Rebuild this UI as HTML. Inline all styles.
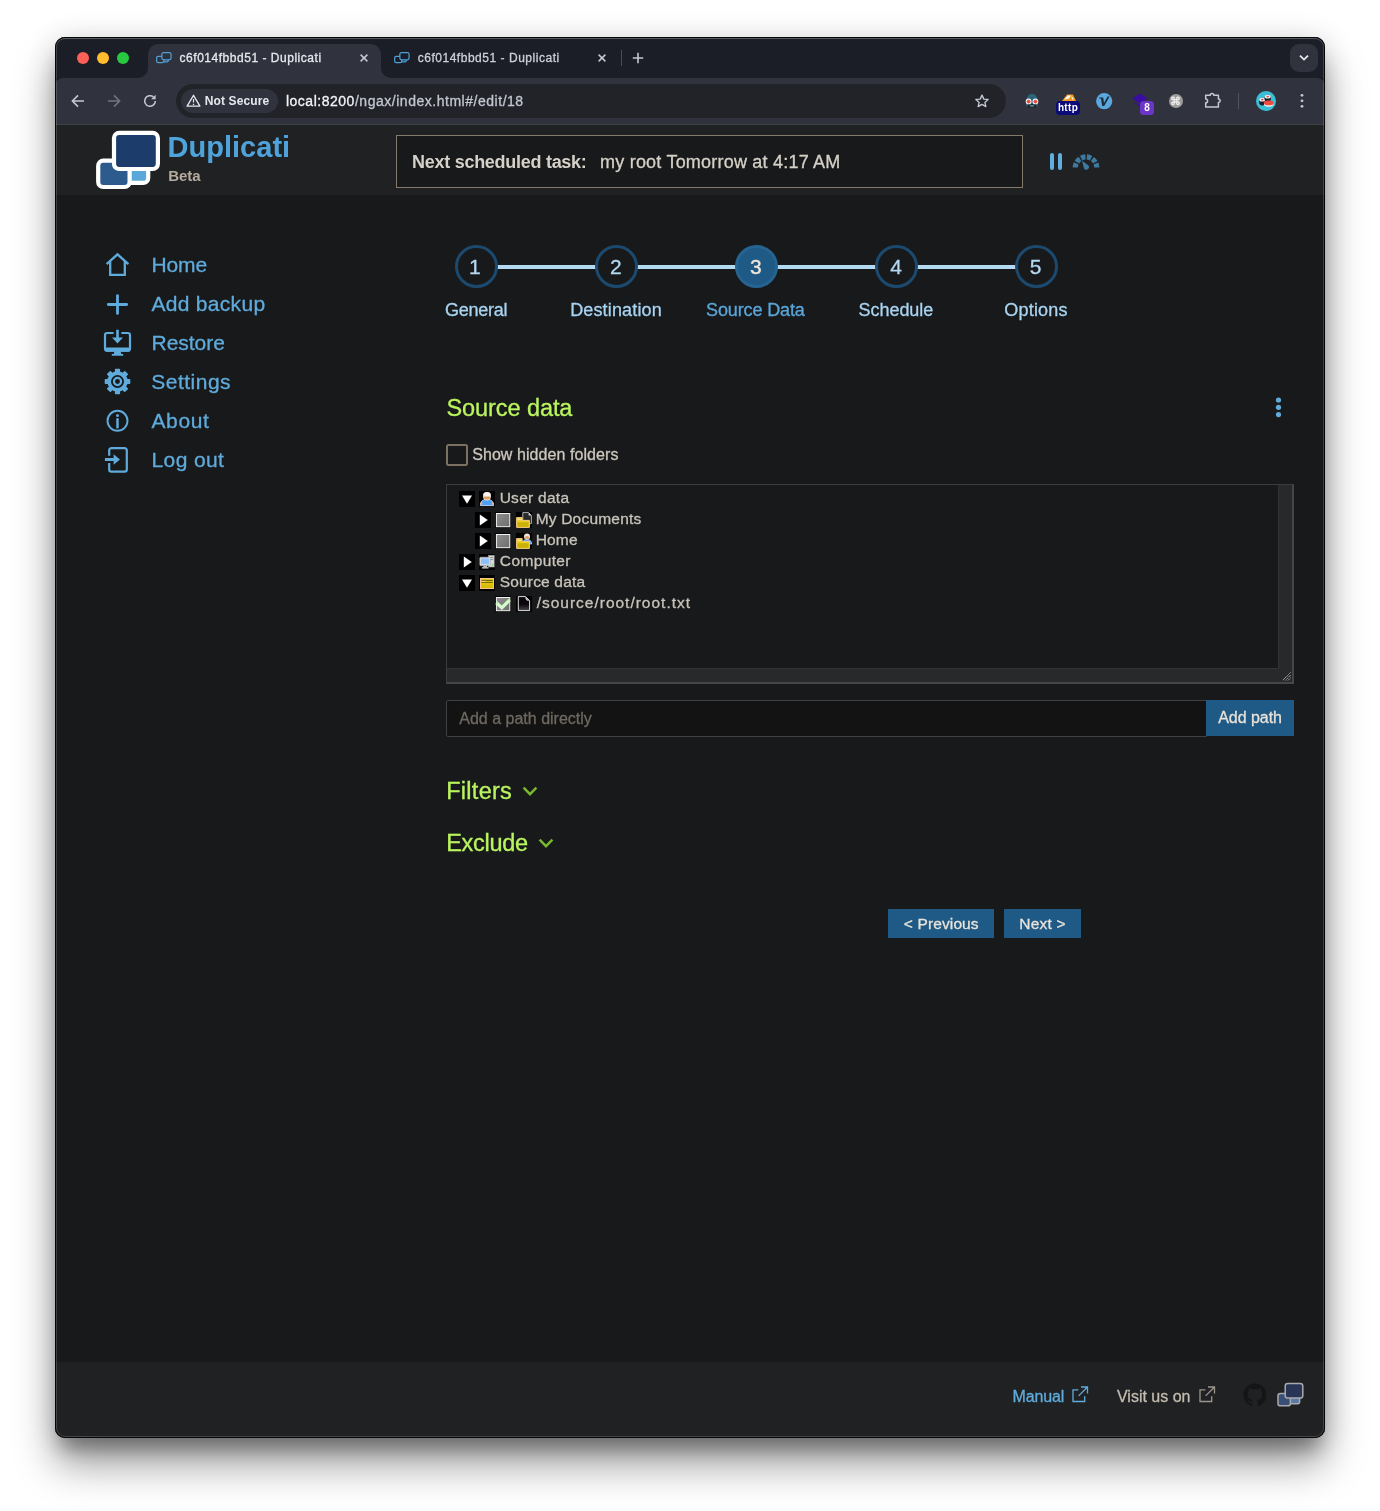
<!DOCTYPE html>
<html lang="en">
<head>
<meta charset="utf-8">
<title>c6f014fbbd51 - Duplicati</title>
<style>
html,body{margin:0;padding:0;background:#fff;}
body{width:1380px;height:1511px;position:relative;overflow:hidden;font-family:"Liberation Sans",sans-serif;}
#win{position:absolute;left:55px;top:37px;width:1270px;height:1401px;border-radius:10px;overflow:hidden;background:#18191b;
 box-shadow:0 26px 40px rgba(0,0,0,.40),0 16px 18px -6px rgba(0,0,0,.28),0 0 30px rgba(0,0,0,.11);}
#page{will-change:transform;position:absolute;left:-55px;top:-37px;width:1380px;height:1511px;}
#page div,#page span,#page svg,#page a{position:absolute;box-sizing:border-box;}
.t{white-space:pre;font-family:"Liberation Sans",sans-serif;}
.s{-webkit-text-stroke:0.3px;}
svg{overflow:visible;}
#edge{position:absolute;left:55px;top:37px;width:1270px;height:1401px;border-radius:10px;box-shadow:inset 0 0 0 1px rgba(0,0,0,.92),inset 0 0 0 2px rgba(255,255,255,.17),inset 0 2px 0 0 rgba(255,255,255,.12);pointer-events:none;}

</style>
</head>
<body>
<div id="win"><div id="page">

<div class="tabstrip" style="left:55px;top:37px;width:1270px;height:41px;background:#1b1e27"></div>
<div class="toolbar" style="left:55px;top:78px;width:1270px;height:47px;background:#30333d;border-bottom:1px solid #3e4048;border-radius:8px 8px 0 0"></div>
<div class="tab active" style="left:148px;top:44px;width:233px;height:34px;background:#30333d;border-radius:10px 10px 0 0"></div>
<svg style="left:138px;top:68px" width="10" height="10"><path d="M10 0V10H0A10 10 0 0 0 10 0Z" fill="#30333d"/></svg>
<svg style="left:381px;top:68px" width="10" height="10"><path d="M0 0V10H10A10 10 0 0 1 0 0Z" fill="#30333d"/></svg>
<div class="light" style="left:76.8px;top:51.8px;width:12.4px;height:12.4px;border-radius:50%;background:#fe5f57"></div>
<div class="light" style="left:96.8px;top:51.8px;width:12.4px;height:12.4px;border-radius:50%;background:#febc2e"></div>
<div class="light" style="left:116.8px;top:51.8px;width:12.4px;height:12.4px;border-radius:50%;background:#28c840"></div>
<svg style="left:155.8px;top:52.4px" width="16" height="11.3" viewBox="0 0 17 12"><g fill="none" stroke="#4e9fd4" stroke-width="1.3"><rect x="6.2" y="0.7" width="9.8" height="7.6" rx="1.8"/><path d="M6.2 4.6H2.4a1.7 1.7 0 0 0-1.7 1.7v3.3a1.7 1.7 0 0 0 1.7 1.7h4.2a1.7 1.7 0 0 0 1.7-1.7V8.3"/><path d="M8.3 10.4h3.4a1.3 1.3 0 0 0 1.3-1.3V8.3"/></g></svg>
<span class="t s" style="left:179.59px;top:49px;font-size:12px;line-height:18px;color:#e6e8ee;letter-spacing:0.524px;">c6f014fbbd51 - Duplicati</span>
<svg style="left:360px;top:54px" width="8" height="8" viewBox="0 0 8 8"><path d="M0.6 0.6L7.4 7.4M7.4 0.6L0.6 7.4" stroke="#c5c8d2" stroke-width="1.5" fill="none"/></svg>
<svg style="left:393.9px;top:52.4px" width="16" height="11.3" viewBox="0 0 17 12"><g fill="none" stroke="#4e9fd4" stroke-width="1.3"><rect x="6.2" y="0.7" width="9.8" height="7.6" rx="1.8"/><path d="M6.2 4.6H2.4a1.7 1.7 0 0 0-1.7 1.7v3.3a1.7 1.7 0 0 0 1.7 1.7h4.2a1.7 1.7 0 0 0 1.7-1.7V8.3"/><path d="M8.3 10.4h3.4a1.3 1.3 0 0 0 1.3-1.3V8.3"/></g></svg>
<span class="t s" style="left:417.69px;top:49px;font-size:12px;line-height:18px;color:#cdd0d8;letter-spacing:0.524px;">c6f014fbbd51 - Duplicati</span>
<svg style="left:598px;top:54px" width="8" height="8" viewBox="0 0 8 8"><path d="M0.6 0.6L7.4 7.4M7.4 0.6L0.6 7.4" stroke="#c5c8d2" stroke-width="1.5" fill="none"/></svg>
<div style="left:620.5px;top:50px;width:1.2px;height:16px;background:#4a4d57"></div>
<svg style="left:632px;top:52px" width="12" height="12" viewBox="0 0 12 12"><path d="M6 0.8V11.2M0.8 6H11.2" stroke="#c5c8d2" stroke-width="1.6" fill="none"/></svg>
<div style="left:1290px;top:44px;width:28px;height:28px;border-radius:9px;background:#30333d"></div>
<svg style="left:1298px;top:54px" width="12" height="8" viewBox="0 0 12 8"><path d="M2 1.6L6 5.6L10 1.6" stroke="#e6e8ee" stroke-width="1.8" fill="none"/></svg>

<svg style="left:71px;top:94px" width="14" height="14" viewBox="0 0 14 14"><path d="M13 7H1.8M7 1.4L1.4 7L7 12.6" stroke="#c5c8d2" stroke-width="1.6" fill="none"/></svg>
<svg style="left:107px;top:94px" width="14" height="14" viewBox="0 0 14 14"><path d="M1 7H12.2M7 1.4L12.6 7L7 12.6" stroke="#72757f" stroke-width="1.6" fill="none"/></svg>
<svg style="left:143px;top:94px" width="14" height="14" viewBox="0 0 14 14"><path d="M12.3 7A5.3 5.3 0 1 1 10.4 2.9" stroke="#c5c8d2" stroke-width="1.5" fill="none"/><path d="M12.6 0.8V5.2H8.2Z" fill="#c5c8d2"/></svg>

<div class="omnibox" style="left:176px;top:84px;width:829.6px;height:34px;border-radius:17px;background:#212328"></div>
<div class="chip" style="left:181px;top:89px;width:96.5px;height:24px;border-radius:12px;background:#30333d"></div>
<svg style="left:186px;top:94px" width="15" height="13" viewBox="0 0 15 13"><path d="M7.5 1.3L13.9 12.2H1.1Z" stroke="#e6e8ee" stroke-width="1.3" fill="none" stroke-linejoin="round"/><path d="M7.5 5V8.6M7.5 9.8V11" stroke="#e6e8ee" stroke-width="1.2"/></svg>
<span class="t" style="left:204.78px;top:92px;font-size:12px;line-height:18px;color:#e6e8ee;font-weight:700;letter-spacing:0.115px;">Not Secure</span>
<span class="t s" style="left:285.89px;top:91px;font-size:14px;line-height:20px;color:#c3c6d0;letter-spacing:0.523px;"><span class="host" style="position:static;color:#f1f3f8">local:8200</span>/ngax/index.html#/edit/18</span>
<svg style="left:974px;top:92.6px" width="16" height="16" viewBox="0 0 24 24"><path d="M12 3.2l2.7 6 6.5.6-4.9 4.3 1.5 6.4-5.8-3.5-5.8 3.5 1.5-6.4-4.9-4.3 6.5-.6z" stroke="#c5c8d2" stroke-width="2" fill="none" stroke-linejoin="round"/></svg>

<svg style="left:1024px;top:93px" width="16" height="16" viewBox="0 0 16 16"><path d="M2.2 9C2.2 3.8 4.6 0.8 8 0.8S13.8 3.8 13.8 9V13.6H2.2Z" fill="#2b6478"/><rect x="3.6" y="11.2" width="8.8" height="3.4" rx="0.6" fill="#16242b"/><circle cx="4.6" cy="8.4" r="2.9" fill="#f2f2f2"/><circle cx="11.4" cy="8.4" r="2.9" fill="#f2f2f2"/><circle cx="4.6" cy="8.6" r="1.9" fill="#ea4d3c"/><circle cx="11.4" cy="8.6" r="1.9" fill="#ea4d3c"/><rect x="6" y="12.4" width="4" height="1" fill="#8fb3c2"/></svg>
<svg style="left:1061px;top:93px" width="16" height="9" viewBox="0 0 16 9"><path d="M1 8L6 1.5H12L15 8Z" fill="#f29a1f"/><path d="M3 6.5L7 2.5H10L8 5.5Z" fill="#fff"/><path d="M10.5 3L13 6.5H11Z" fill="#fff"/></svg>
<div style="left:1056px;top:101px;width:24px;height:14px;border-radius:4px;background:#0a0a78"></div>
<span class="t" style="left:1057.95px;top:100px;font-size:10px;line-height:15px;color:#ffffff;font-weight:700;letter-spacing:0.307px;">http</span>
<svg style="left:1095.8px;top:93px" width="16.4" height="16.4" viewBox="0 0 16.4 16.4"><circle cx="8.2" cy="8.2" r="8.1" fill="#5aa8de"/><path d="M3.2 4.6H7.2L8 10L11.6 3.6L13.6 3.4L8.2 13H6.2L5 5.6H3.2Z" fill="#1d2b3a"/></svg>
<svg style="left:1131.5px;top:92.5px" width="17" height="16" viewBox="0 0 17 16"><path d="M8 0.4L15.6 5.4L8 10.4L0.4 5.4Z" fill="#3a0ca3"/><path d="M0.4 8.4L8 13.4L15.6 8.4L8 11.8Z" fill="#3a0ca3"/></svg>
<div style="left:1140px;top:100.8px;width:14px;height:14px;border-radius:3.5px;background:#6b36c7"></div>
<span class="t" style="left:1144.13px;top:100px;font-size:10px;line-height:15px;color:#ffffff;font-weight:700;">8</span>
<div style="left:1168.8px;top:93.6px;width:14.6px;height:14.6px;border-radius:50%;background:#9d9d9d"></div>
<span class="t s" style="left:1170.18px;top:93px;font-size:11px;line-height:16px;color:#f2f2f2;font-family:"DejaVu Sans",sans-serif;">⌘</span>
<svg style="left:1203px;top:90px" width="21" height="20" viewBox="1203 90 21 20"><path d="M1205.7 95.2H1210.3A1.75 1.75 0 0 1 1213.8 95.2H1218.4V99.1A1.75 1.75 0 0 1 1218.4 102.6V107H1205.7V102.8A1.9 1.9 0 0 0 1205.7 99Z" stroke="#c5c8d2" stroke-width="1.5" fill="none" stroke-linejoin="round"/></svg>
<div style="left:1238.2px;top:93px;width:1.3px;height:16px;background:#50535d"></div>
<div style="left:1256px;top:90.8px;width:20.2px;height:20.2px;border-radius:50%;background:#3bbfd8"></div>
<svg style="left:1256px;top:90.8px" width="20.2" height="20.2" viewBox="0 0 20 20"><ellipse cx="6.2" cy="10.6" rx="3.2" ry="3.8" fill="#1b1f2e"/><ellipse cx="6.2" cy="8.6" rx="3" ry="1.9" fill="#f4f4f4"/><ellipse cx="6.2" cy="8.6" rx="1.3" ry="0.8" fill="#e5483a"/><ellipse cx="11.6" cy="7.4" rx="3.2" ry="3.6" fill="#1b1f2e"/><ellipse cx="11.6" cy="5.6" rx="3" ry="1.8" fill="#f4f4f4"/><ellipse cx="11.6" cy="5.6" rx="1.3" ry="0.8" fill="#e5483a"/><ellipse cx="12.6" cy="13" rx="4.8" ry="2.6" fill="#f4f4f4"/><ellipse cx="12.6" cy="11.8" rx="4.8" ry="2.4" fill="#ef4b3f"/></svg>
<svg style="left:1300px;top:93px" width="4" height="16" viewBox="0 0 4 16"><circle cx="2" cy="2.3" r="1.4" fill="#c5c8d2"/><circle cx="2" cy="7.8" r="1.4" fill="#c5c8d2"/><circle cx="2" cy="13.3" r="1.4" fill="#c5c8d2"/></svg>

<div class="header" style="left:55px;top:125px;width:1270px;height:70px;background:#202123"></div>
<svg class="logo" style="left:90px;top:125px" width="80" height="70" viewBox="90 125 80 70">
<rect x="126" y="158" width="22.2" height="24.9" rx="5" fill="#5aa8da" stroke="#fff" stroke-width="4.2"/>
<rect x="98.2" y="160.7" width="31.4" height="26.3" rx="5" fill="#2e5b8d" stroke="#fff" stroke-width="4.2"/>
<rect x="114" y="132.9" width="43.9" height="36.1" rx="5.2" fill="#1c3d6c" stroke="#fff" stroke-width="4.2"/>
</svg>
<span class="t" style="left:167.49px;top:129px;font-size:29px;line-height:36px;color:#4fa3db;font-weight:700;letter-spacing:0.022px;">Duplicati</span>
<span class="t" style="left:168.15px;top:165px;font-size:15px;line-height:21px;color:#b5ab9e;font-weight:700;">Beta</span>
<div class="status" style="left:396px;top:135px;width:627px;height:52.5px;background:#18191b;border:1px solid #84796a"></div>
<span class="t" style="left:412.06px;top:150px;font-size:18px;line-height:24px;color:#d6d1c8;font-weight:700;letter-spacing:-0.278px;">Next scheduled task:</span>
<span class="t s" style="left:600.06px;top:150px;font-size:18px;line-height:24px;color:#d6d1c8;letter-spacing:0.212px;">my root Tomorrow at 4:17 AM</span>
<div style="left:1049.9px;top:152.6px;width:4.3px;height:17.8px;border-radius:2.2px;background:#5faee0"></div>
<div style="left:1057.9px;top:152.6px;width:4.3px;height:17.8px;border-radius:2.2px;background:#5faee0"></div>
<svg style="left:1072px;top:152.6px" width="28" height="18" viewBox="1072 152 28 18">
<g fill="none" stroke="#40799f" stroke-width="5.2" stroke-dasharray="4.37 1.48">
<path d="M1075.3 166.6A10.7 10.7 0 0 1 1096.7 166.6"/>
</g>
<path d="M1082 159.8L1088.3 164.2A2.7 2.7 0 1 1 1083.9 167.2Z" fill="#40799f"/>
</svg>

<div class="sidebar" style="left:55px;top:195px;width:330px;height:1167px"></div>
<span class="t s" style="left:151.53px;top:251px;font-size:21px;line-height:27px;color:#5fabdc;letter-spacing:-0.146px;">Home</span>
<span class="t s" style="left:151.46px;top:290px;font-size:21px;line-height:27px;color:#5fabdc;letter-spacing:0.300px;">Add backup</span>
<span class="t s" style="left:151.53px;top:329px;font-size:21px;line-height:27px;color:#5fabdc;letter-spacing:-0.040px;">Restore</span>
<span class="t s" style="left:151.24px;top:368px;font-size:21px;line-height:27px;color:#5fabdc;letter-spacing:0.498px;">Settings</span>
<span class="t s" style="left:151.46px;top:407px;font-size:21px;line-height:27px;color:#5fabdc;letter-spacing:0.620px;">About</span>
<span class="t s" style="left:151.53px;top:446px;font-size:21px;line-height:27px;color:#5fabdc;letter-spacing:0.387px;">Log out</span>

<svg style="left:104px;top:251px" width="27" height="27" viewBox="104 251 27 27"><path d="M106.6 264.2L117.5 254.3L128.4 264.2M110.2 261.4V274.9H124.8V261.4" fill="none" stroke="#5fabdc" stroke-width="2.3"/></svg>
<svg style="left:105px;top:292px" width="25" height="25" viewBox="105 292 25 25"><path d="M117.5 295.6V313.4M108.3 304.5H126.7" fill="none" stroke="#5fabdc" stroke-width="2.8" stroke-linecap="round"/></svg>
<svg style="left:102px;top:328px" width="31" height="30" viewBox="102 328 31 30"><path d="M113.6 333H107.2A2.2 2.2 0 0 0 105 335.2V348.4A2.2 2.2 0 0 0 107.2 350.6H127.8A2.2 2.2 0 0 0 130 348.4V335.2A2.2 2.2 0 0 0 127.8 333H121.4" fill="none" stroke="#5fabdc" stroke-width="2.2"/><rect x="105" y="347.4" width="25" height="4.3" rx="1.5" fill="#5fabdc"/><path d="M114.6 351H120.4L121.4 354H123.2V355.8H111.8V354H113.6Z" fill="#5fabdc"/><path d="M116.2 329.8H118.8V337.4H123L117.5 343.4L112 337.4H116.2Z" fill="#5fabdc"/></svg>
<svg style="left:104px;top:368px" width="27" height="27" viewBox="-13.5 -13.5 27 27"><g fill="#5fabdc"><circle r="10.2"/>
<g transform="rotate(0)"><rect x="-2.6" y="-12.8" width="5.2" height="5" rx="0.8"/><rect x="-2.6" y="7.8" width="5.2" height="5" rx="0.8"/></g><g transform="rotate(45)"><rect x="-2.6" y="-12.8" width="5.2" height="5" rx="0.8"/><rect x="-2.6" y="7.8" width="5.2" height="5" rx="0.8"/></g><g transform="rotate(90)"><rect x="-2.6" y="-12.8" width="5.2" height="5" rx="0.8"/><rect x="-2.6" y="7.8" width="5.2" height="5" rx="0.8"/></g><g transform="rotate(135)"><rect x="-2.6" y="-12.8" width="5.2" height="5" rx="0.8"/><rect x="-2.6" y="7.8" width="5.2" height="5" rx="0.8"/></g></g>
<circle r="5.6" fill="none" stroke="#18191b" stroke-width="1.8"/><circle r="2.4" fill="#18191b"/></svg>
<svg style="left:105px;top:408px" width="25" height="25" viewBox="105 408 25 25"><circle cx="117.5" cy="420.8" r="10" fill="none" stroke="#5fabdc" stroke-width="1.9"/><circle cx="117.5" cy="415.4" r="1.5" fill="#5fabdc"/><path d="M117.5 419.3V427.2" stroke="#5fabdc" stroke-width="2.5" stroke-linecap="round"/></svg>
<svg style="left:103px;top:445px" width="27" height="30" viewBox="103 445 27 30"><path d="M109.2 455.8V450.4A2.2 2.2 0 0 1 111.4 448.2H124.6A2.2 2.2 0 0 1 126.8 450.4V469.4A2.2 2.2 0 0 1 124.6 471.6H111.4A2.2 2.2 0 0 1 109.2 469.4V463" fill="none" stroke="#5fabdc" stroke-width="2.2"/><path d="M104.9 458H113.6V454.2L120 459.5L113.6 464.8V461H104.9Z" fill="#5fabdc"/></svg>
<div class="stepline" style="left:476px;top:264.6px;width:560px;height:4.6px;background:#b4d9f3"></div>
<div class="step" style="left:454.5px;top:245px;width:43px;height:43px;border-radius:50%;background:#18191b;border:3.4px solid #1c4a6f"></div>
<span class="t s" style="left:469.10px;top:253px;font-size:21px;line-height:27px;color:#b4d9f3;">1</span>
<span class="t s" style="left:444.90px;top:298px;font-size:18px;line-height:24px;color:#a9d4f2;letter-spacing:-0.234px;">General</span>
<div class="step" style="left:594.5px;top:245px;width:43px;height:43px;border-radius:50%;background:#18191b;border:3.4px solid #1c4a6f"></div>
<span class="t s" style="left:610.04px;top:253px;font-size:21px;line-height:27px;color:#b4d9f3;">2</span>
<span class="t s" style="left:570.15px;top:298px;font-size:18px;line-height:24px;color:#a9d4f2;letter-spacing:0.151px;">Destination</span>
<div class="step active" style="left:734.5px;top:245px;width:43px;height:43px;border-radius:50%;background:#1f5a86;border:3px solid #256390"></div>
<span class="t s" style="left:750.05px;top:253px;font-size:21px;line-height:27px;color:#efe6dc;">3</span>
<span class="t s" style="left:706.12px;top:298px;font-size:18px;line-height:24px;color:#5aa6da;letter-spacing:-0.132px;">Source Data</span>
<div class="step" style="left:874.5px;top:245px;width:43px;height:43px;border-radius:50%;background:#18191b;border:3.4px solid #1c4a6f"></div>
<span class="t s" style="left:890.24px;top:253px;font-size:21px;line-height:27px;color:#b4d9f3;">4</span>
<span class="t s" style="left:858.42px;top:298px;font-size:18px;line-height:24px;color:#a9d4f2;letter-spacing:-0.014px;">Schedule</span>
<div class="step" style="left:1014.5px;top:245px;width:43px;height:43px;border-radius:50%;background:#18191b;border:3.4px solid #1c4a6f"></div>
<span class="t s" style="left:1029.81px;top:253px;font-size:21px;line-height:27px;color:#b4d9f3;">5</span>
<span class="t s" style="left:1004.23px;top:298px;font-size:18px;line-height:24px;color:#a9d4f2;letter-spacing:0.217px;">Options</span>

<span class="t s" style="left:446.44px;top:393px;font-size:23.5px;line-height:30px;color:#baf55e;letter-spacing:-0.073px;">Source data</span>
<svg style="left:1275px;top:396px" width="7" height="23" viewBox="0 0 7 23"><circle cx="3.5" cy="4" r="2.6" fill="#5fabdc"/><circle cx="3.5" cy="11.3" r="2.6" fill="#5fabdc"/><circle cx="3.5" cy="18.6" r="2.6" fill="#5fabdc"/></svg>
<div class="checkbox" style="left:446px;top:444px;width:22px;height:22px;border:2px solid #7b7061;border-radius:2.5px;background:#18191b"></div>
<span class="t s" style="left:472.20px;top:444px;font-size:16px;line-height:21px;color:#cdc7bd;letter-spacing:0.071px;">Show hidden folders</span>
<div class="tree" style="left:446px;top:484px;width:848px;height:200px;border:1px solid #3b3c3e;border-right:2px solid #454648;border-bottom:2px solid #454648;background:#18191b"></div>
<div class="vscroll" style="left:1278px;top:485px;width:14px;height:183px;background:#28292a;border-left:1px solid #323334"></div>
<div class="hscroll" style="left:447px;top:668px;width:831px;height:14px;background:#28292a;border-top:1px solid #323334"></div>
<div class="corner" style="left:1278px;top:668px;width:14px;height:14px;background:#28292a"></div>
<svg style="left:1281.5px;top:671.5px" width="9" height="9" viewBox="0 0 9 9"><path d="M8.5 0.5L0.5 8.5M8.5 3.2L3.2 8.5M8.5 5.9L5.9 8.5" stroke="#d8d8d8" stroke-width="0.9" stroke-dasharray="1 0.6"/></svg>
<svg style="left:459px;top:491px" width="16" height="16" viewBox="0 0 16 16"><rect width="16" height="16" fill="#000"/><path d="M3 4.6H13L8 12.8Z" fill="#fff"/></svg><svg style="left:479px;top:491px" width="16" height="16" viewBox="0 0 16 16"><rect width="16" height="16" fill="#000"/><path d="M1.4 14.6C1.4 10.6 3.6 8.4 8 8.4S14.6 10.6 14.6 14.6Z" fill="#4da0f5" stroke="#cfe0ff" stroke-width="0.9"/><circle cx="2.2" cy="12.6" r="1.2" fill="#f0b27a"/><circle cx="13.8" cy="12.6" r="1.2" fill="#f0b27a"/><ellipse cx="8" cy="5.2" rx="3.9" ry="4.2" fill="#f6e3da"/><ellipse cx="8" cy="6.6" rx="3" ry="2" fill="#d9a066"/><ellipse cx="8" cy="3.4" rx="3.6" ry="2.2" fill="#fbf3f0"/></svg><span class="t s" style="left:499.66px;top:487px;font-size:15.5px;line-height:21px;color:#c9c4ba;letter-spacing:0.270px;">User data</span>
<svg style="left:475px;top:512px" width="16" height="16" viewBox="0 0 16 16"><rect width="16" height="16" fill="#000"/><path d="M4.8 2.6V13.4L12.8 8Z" fill="#fff"/></svg><svg style="left:495px;top:512px" width="16" height="16" viewBox="0 0 16 16"><defs><linearGradient id="cg495512" x1="0" y1="0" x2="1" y2="1"><stop offset="0" stop-color="#8e8e8e"/><stop offset="1" stop-color="#6e6e6e"/></linearGradient></defs><rect width="16" height="16" fill="#000"/><rect x="1.4" y="1.5" width="13.4" height="13.2" fill="url(#cg495512)" stroke="#f4f4f4" stroke-width="1"/></svg><svg style="left:515.8px;top:512px" width="16" height="16" viewBox="0 0 16 16"><rect width="16" height="16" fill="#000"/><path d="M6.8 0.6H12.6L15.4 3.4V11.6H6.8Z" fill="#2a2a2a" stroke="#bdbdbd" stroke-width="0.9"/><path d="M12.6 0.6V3.4H15.4Z" fill="#d8d8d8"/><path d="M0.6 5.6H6.2V8.4H13.4V15.4H0.6Z" fill="#e9cf1c" stroke="#f7c98b" stroke-width="1"/><rect x="1.4" y="10.2" width="11.2" height="4.6" fill="#c9b108"/><rect x="1.6" y="6.8" width="3.8" height="1.2" fill="#f5e88a"/></svg><span class="t s" style="left:535.64px;top:508px;font-size:15.5px;line-height:21px;color:#c9c4ba;letter-spacing:0.209px;">My Documents</span>
<svg style="left:475px;top:533px" width="16" height="16" viewBox="0 0 16 16"><rect width="16" height="16" fill="#000"/><path d="M4.8 2.6V13.4L12.8 8Z" fill="#fff"/></svg><svg style="left:495px;top:533px" width="16" height="16" viewBox="0 0 16 16"><defs><linearGradient id="cg495533" x1="0" y1="0" x2="1" y2="1"><stop offset="0" stop-color="#8e8e8e"/><stop offset="1" stop-color="#6e6e6e"/></linearGradient></defs><rect width="16" height="16" fill="#000"/><rect x="1.4" y="1.5" width="13.4" height="13.2" fill="url(#cg495533)" stroke="#f4f4f4" stroke-width="1"/></svg><svg style="left:515.8px;top:533px" width="16" height="16" viewBox="0 0 16 16"><rect width="16" height="16" fill="#000"/><ellipse cx="11" cy="3.6" rx="3" ry="3.2" fill="#f6e3da"/><ellipse cx="11" cy="4.6" rx="2.2" ry="1.5" fill="#d9a066"/><path d="M6.6 11C6.6 7.6 8.4 6.4 11 6.4S15.6 7.6 15.6 11Z" fill="#4da0f5" stroke="#cfe0ff" stroke-width="0.7"/><path d="M0.6 5.6H6.2V8.4H13.4V15.4H0.6Z" fill="#e9cf1c" stroke="#f7c98b" stroke-width="1"/><rect x="1.4" y="10.2" width="11.2" height="4.6" fill="#c9b108"/><rect x="1.6" y="6.8" width="3.8" height="1.2" fill="#f5e88a"/></svg><span class="t s" style="left:535.64px;top:529px;font-size:15.5px;line-height:21px;color:#c9c4ba;letter-spacing:0.201px;">Home</span>
<svg style="left:459px;top:554px" width="16" height="16" viewBox="0 0 16 16"><rect width="16" height="16" fill="#000"/><path d="M4.8 2.6V13.4L12.8 8Z" fill="#fff"/></svg><svg style="left:479px;top:554px" width="16" height="16" viewBox="0 0 16 16"><rect width="16" height="16" fill="#000"/><rect x="9.6" y="1.4" width="5.6" height="11.6" fill="#d9d9d9" stroke="#9a9a9a" stroke-width="0.6"/><rect x="10.6" y="3" width="3.6" height="0.9" fill="#8a8a8a"/><rect x="10.6" y="5" width="3.6" height="0.9" fill="#8a8a8a"/><circle cx="13.6" cy="10.8" r="0.7" fill="#5ad05a"/><rect x="0.8" y="3.2" width="10.6" height="8.6" rx="0.8" fill="#e4e4e4" stroke="#a8a8a8" stroke-width="0.6"/><rect x="2" y="4.4" width="8.2" height="6" fill="#8ec1fb"/><rect x="4.4" y="11.8" width="3.6" height="1.6" fill="#bdbdbd"/><rect x="2.8" y="13.2" width="6.8" height="1.4" rx="0.6" fill="#e0e0e0"/></svg><span class="t s" style="left:499.86px;top:550px;font-size:15.5px;line-height:21px;color:#c9c4ba;letter-spacing:0.366px;">Computer</span>
<svg style="left:459px;top:575px" width="16" height="16" viewBox="0 0 16 16"><rect width="16" height="16" fill="#000"/><path d="M3 4.6H13L8 12.8Z" fill="#fff"/></svg><svg style="left:479px;top:575px" width="16" height="16" viewBox="0 0 16 16"><defs><linearGradient id="fg479575" x1="0" y1="0" x2="0" y2="1"><stop offset="0" stop-color="#eed61a"/><stop offset="1" stop-color="#d2b600"/></linearGradient></defs><rect width="16" height="16" fill="#000"/><rect x="1.5" y="3.5" width="13" height="10" fill="url(#fg479575)" stroke="#f7c58d" stroke-width="1"/><path d="M2.4 5.4H13.8M2.4 7.4H13.8" stroke="#3a3000" stroke-width="0.7"/><rect x="2.6" y="5.9" width="4" height="1" fill="#f3d98a"/></svg><span class="t s" style="left:499.74px;top:571px;font-size:15.5px;line-height:21px;color:#c9c4ba;letter-spacing:0.171px;">Source data</span>
<svg style="left:495px;top:596px" width="16" height="16" viewBox="0 0 16 16"><defs><linearGradient id="cg495596" x1="0" y1="0" x2="1" y2="1"><stop offset="0" stop-color="#8e8e8e"/><stop offset="1" stop-color="#6e6e6e"/></linearGradient></defs><rect width="16" height="16" fill="#000"/><rect x="1.4" y="1.5" width="13.4" height="13.2" fill="url(#cg495596)" stroke="#f4f4f4" stroke-width="1"/><path d="M1.3 6.7L6.9 11.7L14.7 3.9" stroke="#d4fbcb" stroke-width="3.3" fill="none"/><path d="M1.8 6.2L3 7.2M13.4 4.4L14.6 3.2" stroke="#a9f497" stroke-width="1.8" fill="none"/></svg><svg style="left:515.8px;top:596px" width="16" height="16" viewBox="0 0 16 16"><defs><linearGradient id="pg515.8596" x1="0" y1="0" x2="0" y2="1"><stop offset="0.55" stop-color="#0a060c"/><stop offset="1" stop-color="#4c4a4c"/></linearGradient></defs><rect width="16" height="16" fill="#000"/><path d="M2.3 0.6H9.6L13.6 4.6V14.6H2.3Z" fill="url(#pg515.8596)" stroke="#dcdcdc" stroke-width="1"/><path d="M9.2 0.8C9.2 3.6 10.4 5 13.4 5L9.6 1Z" fill="#c8c8c8"/></svg><span class="t s" style="left:536.69px;top:592px;font-size:15.5px;line-height:21px;color:#c9c4ba;letter-spacing:0.990px;">/source/root/root.txt</span>
<div class="pathinput" style="left:446px;top:700px;width:761px;height:37px;background:#131313;border:1px solid #3f4244;border-radius:2px 0 0 2px"></div>
<span class="t s" style="left:459.26px;top:708px;font-size:16px;line-height:21px;color:#6e6960;letter-spacing:0.005px;">Add a path directly</span>
<div class="btn" style="left:1206px;top:700px;width:88px;height:36px;background:#1f5a86"></div>
<span class="t s" style="left:1218.16px;top:707px;font-size:16px;line-height:21px;color:#e8e2d8;letter-spacing:-0.039px;">Add path</span>
<span class="t s" style="left:446.20px;top:776px;font-size:23.5px;line-height:30px;color:#baf55e;letter-spacing:0.280px;">Filters</span>
<svg style="left:521px;top:784px" width="18" height="14" viewBox="0 0 18 14"><path d="M2.6 3.6L9 10.2L15.4 3.6" stroke="#79b92f" stroke-width="2.4" fill="none"/></svg>
<span class="t s" style="left:446.20px;top:828px;font-size:23.5px;line-height:30px;color:#baf55e;letter-spacing:-0.294px;">Exclude</span>
<svg style="left:537px;top:836px" width="18" height="14" viewBox="0 0 18 14"><path d="M2.6 3.6L9 10.2L15.4 3.6" stroke="#79b92f" stroke-width="2.4" fill="none"/></svg>
<div class="btn" style="left:888px;top:909px;width:106px;height:29px;background:#1f5a86"></div>
<span class="t s" style="left:903.86px;top:913px;font-size:15.5px;line-height:21px;color:#e9e4db;letter-spacing:0.121px;">&lt; Previous</span>
<div class="btn" style="left:1004px;top:909px;width:77px;height:29px;background:#1f5a86"></div>
<span class="t s" style="left:1019.24px;top:913px;font-size:15.5px;line-height:21px;color:#e9e4db;letter-spacing:0.227px;">Next &gt;</span>

<div class="footer" style="left:55px;top:1362px;width:1270px;height:76px;background:#202123"></div>
<span class="t s" style="left:1012.44px;top:1386px;font-size:16px;line-height:21px;color:#5fabdc;letter-spacing:-0.133px;">Manual</span>
<svg style="left:1072px;top:1385.5px" width="16.5" height="16.5" viewBox="0 0 16.5 16.5"><path d="M6.4 3.8H1V15.5H12.7V10.2" fill="none" stroke="#5fabdc" stroke-width="1.3"/><path d="M9 1H15.5V7.5M15.5 1L6.6 9.9" fill="none" stroke="#5fabdc" stroke-width="1.3"/></svg>
<span class="t s" style="left:1116.96px;top:1386px;font-size:16px;line-height:21px;color:#c4bcb0;">Visit us on</span>
<svg style="left:1198.8px;top:1385.5px" width="16.5" height="16.5" viewBox="0 0 16.5 16.5"><path d="M6.4 3.8H1V15.5H12.7V10.2" fill="none" stroke="#9b958b" stroke-width="1.3"/><path d="M9 1H15.5V7.5M15.5 1L6.6 9.9" fill="none" stroke="#9b958b" stroke-width="1.3"/></svg>
<svg style="left:1243px;top:1382.5px" width="24" height="24" viewBox="0 0 24 24"><path d="M12 .5C5.65.5.5 5.65.5 12c0 5.08 3.29 9.39 7.86 10.91.58.1.79-.25.79-.56v-2c-3.2.7-3.88-1.54-3.88-1.54-.52-1.33-1.28-1.68-1.28-1.68-1.04-.71.08-.7.08-.7 1.15.08 1.76 1.18 1.76 1.18 1.02 1.76 2.69 1.25 3.35.96.1-.74.4-1.25.72-1.54-2.55-.29-5.24-1.28-5.24-5.68 0-1.26.45-2.28 1.18-3.08-.12-.29-.51-1.46.11-3.05 0 0 .96-.31 3.15 1.18a10.9 10.9 0 0 1 5.74 0c2.19-1.49 3.15-1.18 3.15-1.18.62 1.59.23 2.76.11 3.05.74.8 1.18 1.82 1.18 3.08 0 4.41-2.69 5.38-5.25 5.67.41.36.78 1.06.78 2.13v3.16c0 .31.21.67.8.56A11.5 11.5 0 0 0 23.500 12C23.500 5.650 18.350.5 12 .5z" fill="#141516"/></svg>
<svg style="left:1276px;top:1381px" width="30" height="28" viewBox="1276 1381 30 28">
<rect x="1289" y="1394" width="10.6" height="9.8" rx="2" fill="#5a7aa6" stroke="#a9aaac" stroke-width="1.5"/>
<rect x="1278" y="1393.6" width="12.4" height="12.2" rx="2.4" fill="#3a4f78" stroke="#a9aaac" stroke-width="1.5"/>
<rect x="1285.2" y="1383.5" width="17.6" height="14.6" rx="2.6" fill="#283557" stroke="#a9aaac" stroke-width="1.5"/>
</svg>

</div></div>
<div id="edge"></div>
</body>
</html>
